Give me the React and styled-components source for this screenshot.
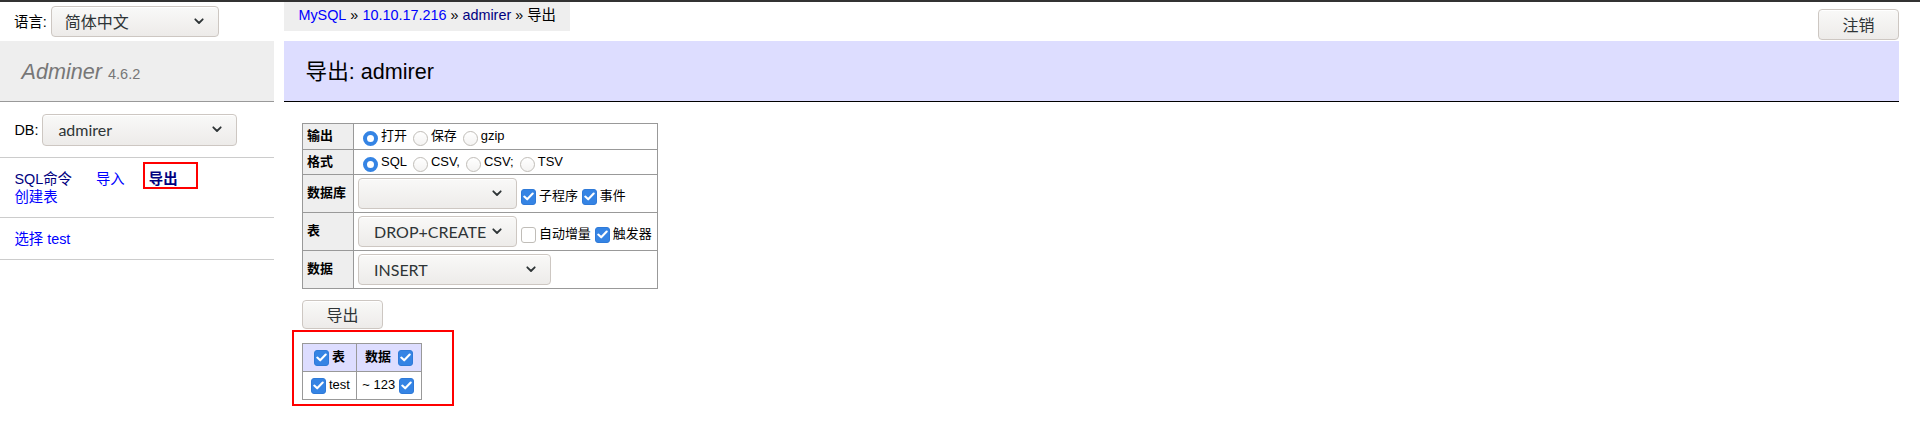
import styled, { createGlobalStyle, css } from "styled-components";

const GlobalStyle = createGlobalStyle`
  html, body { margin: 0; padding: 0; background: #fff; }
  body {
    font: 14.4px/1.25 "Liberation Sans", "Noto Sans CJK SC", sans-serif;
    color: #000;
  }
`;

const uiFont = `Lato, "Noto Sans CJK SC", sans-serif`;

const TopStrip = styled.div`
  height: 2px;
  background: #323232;
`;

const Layout = styled.div`
  display: grid;
  grid-template-columns: 274px 1fr;
`;

/* ---------- sidebar ---------- */

const Sidebar = styled.aside`
  display: flex;
  flex-direction: column;
`;

const LangBar = styled.div`
  height: 39px;
  display: flex;
  align-items: center;
  gap: 4px;
  padding: 0 14px;
`;

const Title = styled.h1`
  margin: 0;
  height: 27px;
  padding: 16.5px 21.6px;
  line-height: 27px;
  background: #eee;
  border-bottom: 1px solid #999;
  color: #777;
  font-size: 21.6px;
  font-weight: normal;
`;

const AppName = styled.a`
  color: #777;
  font-style: italic;
  text-decoration: none;
`;

const Version = styled.span`
  font-size: 14.5px;
  color: #777;
`;

const MenuBlock = styled.div`
  padding: 11.5px 14.4px;
  border-bottom: 1px solid #ccc;
  line-height: 18px;
  display: ${(p) => (p.$flex ? "flex" : "block")};
  align-items: center;
  gap: 4px;
`;

const Link = styled.a`
  color: ${(p) => (p.$visited ? "navy" : "blue")};
  font-weight: ${(p) => (p.$active ? "bold" : "normal")};
  text-decoration: none;
  white-space: nowrap;
  margin-right: ${(p) => (p.$inline ? "20px" : "0")};
  display: inline-block;
  line-height: 18px;
`;

const MarkedLink = styled(Link)`
  position: relative;
  &::after {
    content: "";
    position: absolute;
    left: -6px;
    right: -20px;
    top: -7.5px;
    bottom: -1.5px;
    border: 2px solid #f00;
  }
`;

/* ---------- form controls ---------- */

const SelectBox = styled.div`
  box-sizing: border-box;
  display: inline-flex;
  align-items: center;
  justify-content: space-between;
  flex: none;
  width: ${(p) => p.$w}px;
  height: ${(p) => p.$h ?? 31}px;
  padding: 0 14px 0 ${(p) => p.$pl ?? 15}px;
  border: 1px solid #cdc7c2;
  border-radius: 4px;
  background: linear-gradient(#f9f9f8, #edebe9);
  box-shadow: inset 0 1px #fff;
  color: #2e3436;
  font: 16px/1 ${uiFont};
  white-space: nowrap;
`;

const Chevron = () => (
  <svg width="10" height="7" viewBox="0 0 10 7">
    <path
      d="M1.3 1.3 5 5 8.7 1.3"
      fill="none"
      stroke="#2e3436"
      strokeWidth="1.8"
      strokeLinecap="round"
      strokeLinejoin="round"
    />
  </svg>
);

function Select({ value, w, h, pl }) {
  return (
    <SelectBox $w={w} $h={h} $pl={pl}>
      <span>{value}</span>
      <Chevron />
    </SelectBox>
  );
}

const Button = styled.button`
  box-sizing: border-box;
  width: 81px;
  height: ${(p) => p.$h ?? 31}px;
  padding: 0;
  border: 1px solid #cdc7c2;
  border-radius: 4px;
  background: linear-gradient(#f9f9f8, #edebe9);
  box-shadow: inset 0 1px #fff;
  color: #2e3436;
  font: 16px/1 ${uiFont};
`;

const RadioMark = styled.span`
  box-sizing: border-box;
  flex: none;
  width: 15px;
  height: 15px;
  margin: 4px 3px 0 5px;
  border-radius: 50%;
  ${(p) =>
    p.$on
      ? css`
          border: 4.5px solid #3584e4;
          background: #fff;
        `
      : css`
          border: 1px solid #c0bdb8;
          background: linear-gradient(#fff, #f4f3f2);
        `}
`;

const CheckMark = styled.span`
  box-sizing: border-box;
  flex: none;
  display: inline-flex;
  align-items: center;
  justify-content: center;
  width: 15px;
  height: 16px;
  margin: ${(p) => p.$m ?? "0 3px 0 4px"};
  border-radius: 3px;
  ${(p) =>
    p.$on
      ? css`
          background: #3584e4;
          border: 1px solid #2f7ad8;
        `
      : css`
          background: #fff;
          border: 1px solid #c0bdb8;
        `}
`;

function Check({ on, m }) {
  return (
    <CheckMark $on={on} $m={m}>
      {on && (
        <svg width="11" height="9" viewBox="0 0 11 9">
          <path
            d="M1.3 4.6 4.2 7.3 9.7 1.6"
            fill="none"
            stroke="#fff"
            strokeWidth="2.1"
            strokeLinecap="round"
            strokeLinejoin="round"
          />
        </svg>
      )}
    </CheckMark>
  );
}

const Choice = styled.label`
  display: inline-flex;
  align-items: center;
  white-space: nowrap;
  & + & {
    margin-left: 1px;
  }
`;

const CheckChoice = styled.label`
  display: inline-flex;
  align-items: center;
  white-space: nowrap;
  margin-top: 6px;
`;

/* ---------- main column ---------- */

const Main = styled.main`
  padding: 0 21px 0 10px;
  min-width: 0;
`;

const TopRow = styled.div`
  height: 39px;
  display: flex;
  align-items: flex-start;
  justify-content: space-between;
`;

const Breadcrumb = styled.div`
  height: 29px;
  line-height: 26px;
  padding: 0 14.4px;
  background: #eee;
  white-space: nowrap;
`;

const LogoutButton = styled(Button)`
  margin-top: 7px;
`;

const Heading = styled.h2`
  margin: 0 0 21px;
  height: 27px;
  padding: 16.5px 21.6px;
  line-height: 27px;
  background: #ddf;
  border-bottom: 1px solid #000;
  font-size: 21.6px;
  font-weight: normal;
`;

const Content = styled.div`
  padding-left: 18px;
  display: flex;
  flex-direction: column;
  align-items: flex-start;
`;

const OptTable = styled.table`
  border-collapse: collapse;
  font-size: 12.96px;
  width: 356px;
`;

const Row = styled.tr`
  height: ${(p) => p.$h}px;
`;

const RowHead = styled.th`
  width: 42px;
  padding: 0 4px;
  border: 1px solid #999;
  background: #eee;
  text-align: left;
  font-weight: bold;
  white-space: nowrap;
`;

const Cell = styled.td`
  padding: 0 4px;
  border: 1px solid #999;
`;

const Field = styled.div`
  display: flex;
  align-items: center;
`;

const ExportButton = styled(Button)`
  margin: 11px 0 1px;
  height: 29px;
`;

const Annotation = styled.div`
  margin-left: -10px;
  padding: 11px 30px 4px 8px;
  border: 2px solid #f00;
`;

const ListTable = styled.table`
  border-collapse: collapse;
  table-layout: fixed;
  width: 119px;
  font-size: 12.96px;
`;

const Col = styled.col`
  width: ${(p) => p.$w}px;
`;

const ListRow = styled.tr`
  height: 28px;
`;

const ListHead = styled.th`
  padding: 0 6px;
  border: 1px solid #999;
  background: #ddf;
  font-weight: bold;
`;

const ListCell = styled.td`
  padding: 0 3.9px;
  border: 1px solid #999;
  background: #fff;
`;

const CellLine = styled.div`
  display: flex;
  align-items: center;
  justify-content: ${(p) => p.$justify ?? "flex-start"};
  white-space: nowrap;
`;

function Radio({ on, children }) {
  return (
    <Choice>
      <RadioMark $on={on} />
      {children}
    </Choice>
  );
}

export default function App() {
  return (
    <>
      <GlobalStyle />
      <TopStrip />
      <Layout>
        <Sidebar>
          <LangBar>
            语言:
            <Select value="简体中文" w={168} pl={13} />
          </LangBar>
          <Title>
            <AppName href="#">Adminer</AppName> <Version>4.6.2</Version>
          </Title>
          <MenuBlock $flex>
            DB:
            <Select value="admirer" w={195} h={32} />
          </MenuBlock>
          <MenuBlock>
            <div>
              <Link $inline $visited href="#">SQL命令</Link>{" "}
              <Link $inline href="#">导入</Link>{" "}
              <MarkedLink $inline $visited $active href="#">导出</MarkedLink>
            </div>
            <div>
              <Link href="#">创建表</Link>
            </div>
          </MenuBlock>
          <MenuBlock>
            <Link href="#">选择 test</Link>
          </MenuBlock>
        </Sidebar>

        <Main>
          <TopRow>
            <Breadcrumb>
              <Link href="#">MySQL</Link> » <Link href="#">10.10.17.216</Link> »{" "}
              <Link $visited href="#">admirer</Link> » 导出
            </Breadcrumb>
            <LogoutButton>注销</LogoutButton>
          </TopRow>
          <Heading>导出: admirer</Heading>

          <Content>
            <OptTable>
              <tbody>
                <Row $h={26}>
                  <RowHead>输出</RowHead>
                  <Cell>
                    <Field>
                      <Radio on>打开</Radio>
                      <Radio>保存</Radio>
                      <Radio>gzip</Radio>
                    </Field>
                  </Cell>
                </Row>
                <Row $h={25}>
                  <RowHead>格式</RowHead>
                  <Cell>
                    <Field>
                      <Radio on>SQL</Radio>
                      <Radio>CSV,</Radio>
                      <Radio>CSV;</Radio>
                      <Radio>TSV</Radio>
                    </Field>
                  </Cell>
                </Row>
                <Row $h={38}>
                  <RowHead>数据库</RowHead>
                  <Cell>
                    <Field>
                      <Select value="" w={159} />
                      <CheckChoice>
                        <Check on />
                        子程序
                      </CheckChoice>
                      <CheckChoice>
                        <Check on />
                        事件
                      </CheckChoice>
                    </Field>
                  </Cell>
                </Row>
                <Row $h={38}>
                  <RowHead>表</RowHead>
                  <Cell>
                    <Field>
                      <Select value="DROP+CREATE" w={159} />
                      <CheckChoice>
                        <Check />
                        自动增量
                      </CheckChoice>
                      <CheckChoice>
                        <Check on />
                        触发器
                      </CheckChoice>
                    </Field>
                  </Cell>
                </Row>
                <Row $h={38}>
                  <RowHead>数据</RowHead>
                  <Cell>
                    <Field>
                      <Select value="INSERT" w={193} />
                    </Field>
                  </Cell>
                </Row>
              </tbody>
            </OptTable>

            <ExportButton>导出</ExportButton>

            <Annotation>
              <ListTable>
                <colgroup>
                  <Col $w={54} />
                  <Col $w={65} />
                </colgroup>
                <thead>
                  <ListRow>
                    <ListHead>
                      <CellLine $justify="center">
                        <Check on m="3px 3px 3px 0" />表
                      </CellLine>
                    </ListHead>
                    <ListHead>
                      <CellLine $justify="center">
                        数据
                        <Check on m="3px 0 3px 7px" />
                      </CellLine>
                    </ListHead>
                  </ListRow>
                </thead>
                <tbody>
                  <ListRow>
                    <ListCell>
                      <CellLine>
                        <Check on m="3px 3px 3px 4px" />
                        test
                      </CellLine>
                    </ListCell>
                    <ListCell>
                      <CellLine $justify="flex-end">
                        ~ 123
                        <Check on m="3px 3px 3px 4px" />
                      </CellLine>
                    </ListCell>
                  </ListRow>
                </tbody>
              </ListTable>
            </Annotation>
          </Content>
        </Main>
      </Layout>
    </>
  );
}
